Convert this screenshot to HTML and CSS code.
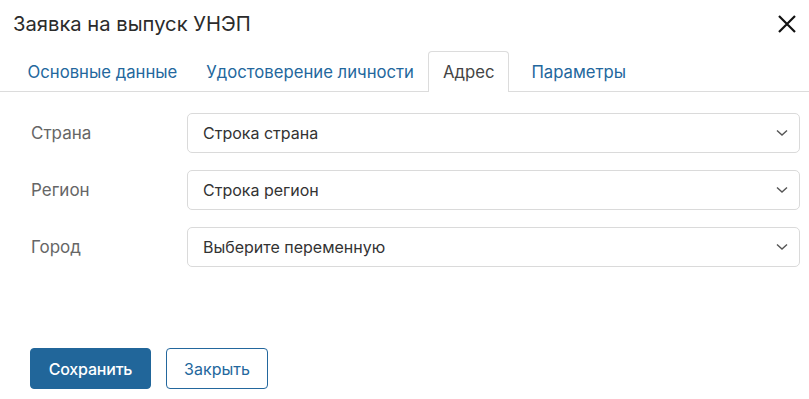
FILE: index.html
```html
<!DOCTYPE html>
<html lang="ru">
<head>
<meta charset="utf-8">
<link rel="stylesheet" href="styles.css">
</head>
<body>
<div class="dialog">
  <div class="header">
    <div class="title">Заявка на выпуск УНЭП</div>
    <button class="close" aria-label="Закрыть">
      <svg width="20" height="20" viewBox="0 0 20 20"><path d="M2 2 L18 18 M18 2 L2 18" stroke="#111" stroke-width="2.2" fill="none"/></svg>
    </button>
  </div>
  <div class="tabs">
    <div class="tab">Основные данные</div>
    <div class="tab">Удостоверение личности</div>
    <div class="tab active">Адрес</div>
    <div class="tab after-active">Параметры</div>
  </div>
  <div class="form">
    <div class="row">
      <div class="label">Страна</div>
      <div class="select"><span>Строка страна</span><svg class="chev" width="12" height="8" viewBox="0 0 12 8"><path d="M1 1.5 L6 6 L11 1.5" stroke="#555" stroke-width="1.4" fill="none"/></svg></div>
    </div>
    <div class="row">
      <div class="label">Регион</div>
      <div class="select"><span>Строка регион</span><svg class="chev" width="12" height="8" viewBox="0 0 12 8"><path d="M1 1.5 L6 6 L11 1.5" stroke="#555" stroke-width="1.4" fill="none"/></svg></div>
    </div>
    <div class="row">
      <div class="label">Город</div>
      <div class="select"><span>Выберите переменную</span><svg class="chev" width="12" height="8" viewBox="0 0 12 8"><path d="M1 1.5 L6 6 L11 1.5" stroke="#555" stroke-width="1.4" fill="none"/></svg></div>
    </div>
  </div>
  <div class="footer">
    <button class="btn primary">Сохранить</button>
    <button class="btn secondary">Закрыть</button>
  </div>
</div>
</body>
</html>
```
FILE: styles.css
```css
* { box-sizing: border-box; }
html, body { margin: 0; padding: 0; background: #fff; }
body { font-family: Inter, "Noto Sans", sans-serif; color: #333; width: 809px; height: 399px; overflow: hidden; }
.dialog { display: flex; flex-direction: column; }
.header { display: flex; align-items: center; justify-content: space-between; height: 47px; padding: 0 12px 0 13px; }
.title { font-size: 20.2px; color: #2b2b2b; }
.close { background: none; border: 0; padding: 0; width: 20px; height: 20px; display: flex; }
.tabs { display: flex; margin-top: 4px; padding-left: 13px; border-bottom: 1px solid #dcdcdc; height: 41px; }
.tab { padding: 0 13.5px; font-size: 16.7px; color: #23679d; display: flex; align-items: center; height: 41px; border: 1px solid transparent; border-bottom: 0; border-radius: 4px 4px 0 0; }
.tab.active { color: #444; border-color: #dcdcdc; background: #fff; height: 41px; margin-bottom: -1px; }
.tab.after-active { margin-left: 8px; }
.form { padding: 21px 9px 0 31px; display: flex; flex-direction: column; gap: 17px; }
.row { display: flex; align-items: center; }
.label { width: 156px; font-size: 17px; color: #666; }
.select { flex: 1; height: 40px; border: 1px solid #dadada; border-radius: 5px; display: flex; align-items: center; justify-content: space-between; padding: 0 11px 0 15px; font-size: 16px; color: #333; }
.chev { display: block; }
.footer { display: flex; gap: 15px; padding: 81px 0 0 30px; }
.btn { font-family: Inter, "Noto Sans", sans-serif; font-size: 16px; height: 41px; border-radius: 4px; padding: 0; }
.primary { width: 121px; background: #21669a; color: #fff; border: 1px solid #21669a; font-weight: 500; letter-spacing: -0.2px; }
.secondary { width: 102px; background: #fff; color: #23679d; border: 1px solid #23679d; }
```
